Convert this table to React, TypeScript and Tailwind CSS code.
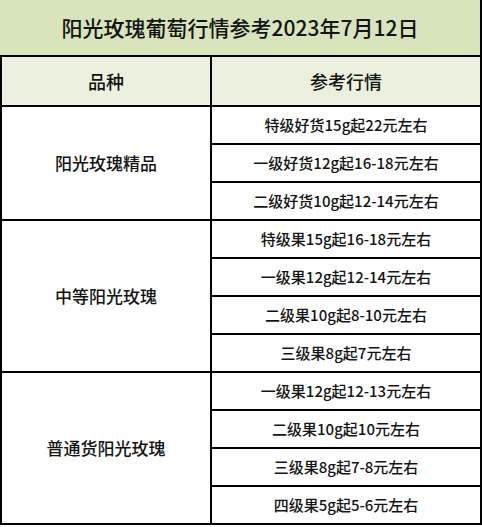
import React from "react";

type Group = { name: string; prices: string[] };

const groups: Group[] = [
  {
    name: "阳光玫瑰精品",
    prices: ["特级好货15g起22元左右", "一级好货12g起16-18元左右", "二级好货10g起12-14元左右"],
  },
  {
    name: "中等阳光玫瑰",
    prices: ["特级果15g起16-18元左右", "一级果12g起12-14元左右", "二级果10g起8-10元左右", "三级果8g起7元左右"],
  },
  {
    name: "普通货阳光玫瑰",
    prices: ["一级果12g起12-13元左右", "二级果10g起10元左右", "三级果8g起7-8元左右", "四级果5g起5-6元左右"],
  },
];

const font = { fontFamily: '"Noto Sans CJK SC", "Noto Sans", sans-serif' };

const App: React.FC = () => {
  return (
    <div className="w-[482px] h-[527px] bg-white text-[#141414]" style={font}>
      <div className="h-[57px] bg-[#d8e4bc] border-r-2 border-b-2 border-black flex items-center justify-center text-[21px] font-medium">
        阳光玫瑰葡萄行情参考2023年7月12日
      </div>
      <div className="flex h-[50px] bg-[#ebf1de] border-l-2 border-r-2 border-b-2 border-black text-[18px] font-medium">
        <div className="w-[210px] border-r-2 border-black flex items-center justify-center">品种</div>
        <div className="flex-1 flex items-center justify-center">参考行情</div>
      </div>
      {groups.map((g) => (
        <div key={g.name} className="flex border-l-2 border-r-2 border-black">
          <div className="w-[210px] border-r-2 border-b-2 border-black flex items-center justify-center text-[17px] font-medium">
            {g.name}
          </div>
          <div className="flex-1 flex flex-col">
            {g.prices.map((p) => (
              <div key={p} className="h-[38px] border-b-2 border-black flex items-center justify-center text-[15px] font-medium">
                {p}
              </div>
            ))}
          </div>
        </div>
      ))}
    </div>
  );
};

export default App;
